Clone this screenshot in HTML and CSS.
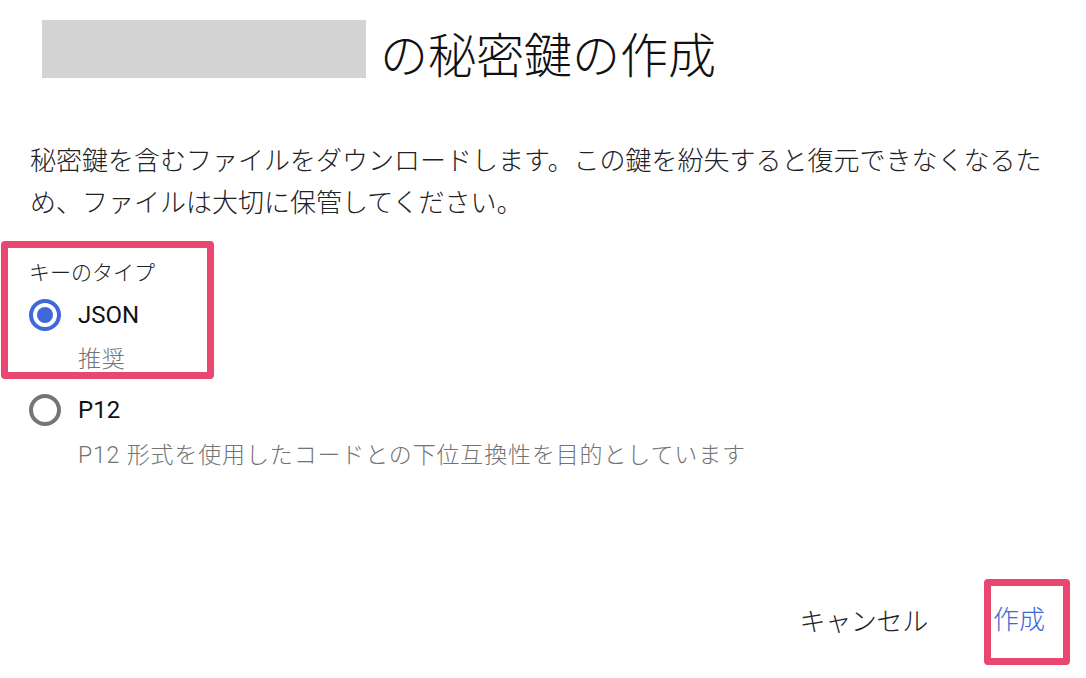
FILE: index.html
```html
<!DOCTYPE html>
<html lang="ja">
<head>
<meta charset="utf-8">
<link rel="stylesheet" href="styles.css">
</head>
<body>
<div class="dialog">
  <div class="title-row">
    <div class="redacted"></div>
    <h1 class="title">の秘密鍵の作成</h1>
  </div>
  <p class="desc">秘密鍵を含むファイルをダウンロードします。この鍵を紛失すると復元できなくなるため、ファイルは大切に保管してください。</p>
  <div class="group highlight">
    <div class="group-label">キーのタイプ</div>
    <div class="option">
      <span class="radio checked"></span>
      <span class="option-label">JSON</span>
    </div>
    <div class="hint hint-tight">推奨</div>
  </div>
  <div class="option option-out">
    <span class="radio"></span>
    <span class="option-label">P12</span>
  </div>
  <div class="hint hint-out">P12 形式を使用したコードとの下位互換性を目的としています</div>
  <div class="actions">
    <button class="btn btn-cancel">キャンセル</button>
    <button class="btn btn-primary highlight">作成</button>
  </div>
</div>
</body>
</html>
```
FILE: styles.css
```css
html, body {
  margin: 0;
  padding: 0;
  background: #ffffff;
}
body {
  font-family: Roboto, "Noto Sans CJK JP", sans-serif;
  color: #202124;
  width: 1086px;
  height: 678px;
  overflow: hidden;
}
.dialog {
  display: flex;
  flex-direction: column;
}
.title-row {
  display: flex;
  align-items: flex-start;
  padding: 20px 0 0 42px;
}
.redacted {
  width: 324px;
  height: 58px;
  background: #d3d3d3;
}
.title {
  margin: 13px 0 0 14px;
  font-size: 48px;
  line-height: 48px;
  font-weight: 300;
  color: #111;
}
.desc {
  margin: 59px 30px 0 30px;
  font-size: 26px;
  line-height: 42px;
  letter-spacing: 0;
  font-weight: 300;
  color: #202124;
}
.highlight {
  border: 7px solid #e9476f;
  border-radius: 4px;
}
.group {
  align-self: flex-start;
  margin: 17px 0 0 1px;
  padding: 10px 0 0 21px;
  width: 178px;
  display: flex;
  flex-direction: column;
}
.group-label {
  font-size: 21px;
  line-height: 30px;
  font-weight: 300;
  color: #202124;
}
.option {
  display: flex;
  align-items: center;
  gap: 17px;
  margin-top: 11px;
  height: 32px;
}
.option-out {
  margin-top: 15px;
  margin-left: 29px;
}
.radio {
  box-sizing: border-box;
  width: 32px;
  height: 32px;
  border-radius: 50%;
  border: 4px solid #757575;
  display: flex;
  align-items: center;
  justify-content: center;
}
.radio.checked {
  border-color: #3f69d8;
}
.radio.checked::after {
  content: "";
  width: 16px;
  height: 16px;
  border-radius: 50%;
  background: #3f69d8;
}
.option-label {
  font-size: 24px;
  color: #111;
}
.hint {
  font-size: 23px;
  color: #737373;
  letter-spacing: 0.85px;
  font-weight: 300;
}
.hint-tight {
  margin: 17px 0 0 49px;
  line-height: 24px;
}
.hint-out {
  margin: 15px 0 0 78px;
  line-height: 30px;
}
.actions {
  display: flex;
  justify-content: flex-end;
  align-items: center;
  margin-top: 108px;
  padding-right: 16px;
}
.btn {
  font-family: Roboto, "Noto Sans CJK JP", sans-serif;
  font-size: 26px;
  line-height: 36px;
  font-weight: 300;
  background: none;
  border: none;
  cursor: pointer;
}
.btn-cancel {
  color: #202124;
  padding: 0;
  margin-right: 56px;
  letter-spacing: -0.3px;
}
.btn-primary {
  color: #3f69d8;
  padding: 16px 18px 20px 2px;
  border: 7px solid #e9476f;
}
```
